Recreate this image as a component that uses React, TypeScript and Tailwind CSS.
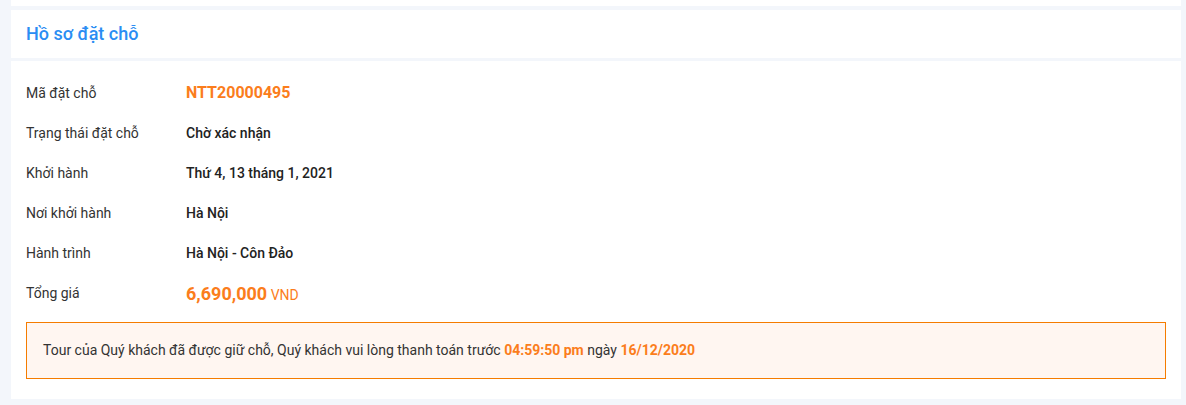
import React from 'react';

interface InfoRow {
  label: string;
  value: React.ReactNode;
}

const rows: InfoRow[] = [
  {
    label: 'Mã đặt chỗ',
    value: <span className="text-[16px] font-bold text-[#fb7d1c]">NTT20000495</span>,
  },
  { label: 'Trạng thái đặt chỗ', value: <span className="font-medium text-[#222]">Chờ xác nhận</span> },
  { label: 'Khởi hành', value: <span className="font-medium text-[#222]">Thứ 4, 13 tháng 1, 2021</span> },
  { label: 'Nơi khởi hành', value: <span className="font-medium text-[#222]">Hà Nội</span> },
  { label: 'Hành trình', value: <span className="font-medium text-[#222]">Hà Nội - Côn Đảo</span> },
  {
    label: 'Tổng giá',
    value: (
      <span className="text-[#fb7d1c]">
        <span className="text-[18px] font-bold">6,690,000</span>{' '}
        <span className="text-[14px]">VND</span>
      </span>
    ),
  },
];

export default function App() {
  return (
    <div
      className="w-[1186px] h-[405px] bg-[#f3f6fb] pl-[11px] pr-[5px] overflow-hidden"
      style={{ fontFamily: 'Roboto, "Noto Sans", sans-serif' }}
    >
      {/* tail of the previous card */}
      <div className="h-[6px] bg-white" />

      <div className="mt-[4px] h-[48px] bg-white flex items-center px-[15px]">
        <h2 className="text-[18px] font-medium text-[#2a8df3] leading-none">Hồ sơ đặt chỗ</h2>
      </div>

      <div className="mt-[3px] bg-white px-[15px] pt-[12px] pb-[20px]">
        {rows.map((row) => (
          <div key={row.label} className="h-[40px] flex items-center text-[14px]">
            <div className="w-[160px] text-[#333]">{row.label}</div>
            <div>{row.value}</div>
          </div>
        ))}

        <div className="mt-[9px] h-[57px] border border-[#f57c00] bg-[#fff6f1] flex items-center px-[16px] text-[14px] text-[#333]">
          <span>
            Tour của Quý khách đã được giữ chỗ, Quý khách vui lòng thanh toán trước{' '}
            <span className="font-bold text-[#fb7d1c]">04:59:50 pm</span> ngày{' '}
            <span className="font-bold text-[#fb7d1c]">16/12/2020</span>
          </span>
        </div>
      </div>
    </div>
  );
}
